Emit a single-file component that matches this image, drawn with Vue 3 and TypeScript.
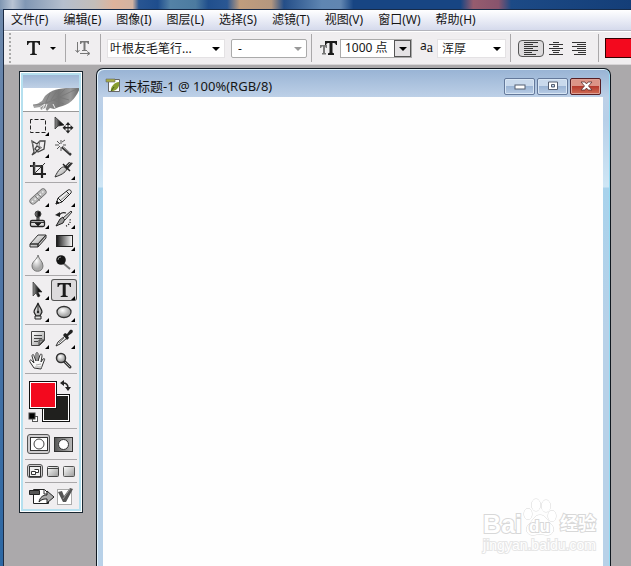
<script setup lang="ts">
import { ref } from 'vue'

interface Tool {
  id: string
  label: string
  flyout?: boolean
  art: string
}

const menus: string[] = ['文件(F)', '编辑(E)', '图像(I)', '图层(L)', '选择(S)', '滤镜(T)', '视图(V)', '窗口(W)', '帮助(H)']

const groups: Tool[][] = [
  [
    { id: 'marquee', label: '选框', flyout: true, art: '<rect x="5.500" y="4.500" width="15" height="13" fill="none" stroke="#222" stroke-dasharray="4 2" stroke-dashoffset="2"/>' },
    { id: 'move', label: '移动', art: '<path d="M4 2V14L7 11L13 10Z" fill="url(#dark)" stroke="#222" stroke-width=".7"/><path d="M17 7l-2.500 3h2v2h-2v-2l-3 2.800 3 2.800v-2h2v2h-2l2.500 3 2.500-3h-2v-2h2v2l3-2.800-3-2.800v2h-2v-2h2z" fill="#222"/>' },
    { id: 'lasso', label: '套索', flyout: true, art: '<path d="M7 4l5 3 3-3h5l-1 8-6 3-3-3 2-3 3 2-5 5-3 2 2-3z" fill="none" stroke="#444" stroke-width="1.300"/><path d="M7 4l2 8M15 4l-1 5 3 2" fill="none" stroke="#777"/>' },
    { id: 'wand', label: '魔棒', art: '<path d="M10 3v4m0 3v4M4 8h4m4 0h3M6 4l3 3m2-2l3-2M6 12l3-3" stroke="#555"/><path d="M11 10l9 8" stroke="#333" stroke-width="2.500"/><path d="M12 10l7 6" stroke="#aaa"/>' },
    { id: 'crop', label: '裁剪', art: '<path d="M9 3v12h12M5 7h12v12" fill="none" stroke="#222" stroke-width="2.200"/><path d="M9 15L20 4" stroke="#333"/><path d="M10 4v10M6 7h10" stroke="#888" stroke-width=".6"/>' },
    { id: 'slice', label: '切片', flyout: true, art: '<path d="M4 18C7 11 11 7 14 8l2 2c-2 4-6 6-12 8z" fill="url(#metal)" stroke="#333"/><path d="M13 8l5-5 4 1-6 7z" fill="#333"/><path d="M12 5l7 7" stroke="#222" stroke-width="1.500"/><path d="M16 7l4-4" stroke="#aaa"/>' }
  ],
  [
    { id: 'heal', label: '修复', flyout: true, art: '<path d="M8 15L18 6" stroke="#666" stroke-width="7" stroke-linecap="round"/><path d="M8 15L18 6" stroke="#b9b9b9" stroke-width="5.500" stroke-linecap="round"/><path d="M10 10l5 5M12 7l5 5" stroke="#666" stroke-width=".7"/><path d="M7 16L19 5" stroke="#f4f4f4" stroke-width="1.500" stroke-dasharray="1.500 2"/>' },
    { id: 'pencil', label: '画笔', flyout: true, art: '<path d="M5 18l2-6 10-8c2-1 4 1 3 3l-9 9z" fill="#eee" stroke="#222"/><path d="M5 18l3-1-2-2z" fill="#111" stroke="#222"/><path d="M15 5l4 4M7 12l4 4" stroke="#222"/><path d="M10 14l7-6" stroke="#aaa" stroke-width="1.500"/>' },
    { id: 'stamp', label: '图章', flyout: true, art: '<circle cx="13" cy="6" r="3" fill="url(#dark)" stroke="#444"/><path d="M12 9h2v4h-2z" fill="#999" stroke="#222"/><rect x="5.500" y="12.500" width="14" height="6" rx="1.500" fill="#ddd" stroke="#222" stroke-width="1.300"/><path d="M6 14.500h13M13 18l-3-3h6z" fill="#111" stroke="#333"/>' },
    { id: 'history', label: '历史画笔', flyout: true, art: '<path d="M5 18l4-7 3-2 2 2-2 4z" fill="#999" stroke="#222"/><path d="M12 10l8-7 1 1-7 8z" fill="#ccc" stroke="#333"/><path d="M8 8c1-3 4-4 7-3" fill="none" stroke="#222" stroke-width="1.200"/><path d="M9 4L4 7l5 2z" fill="#222"/><path d="M15 18c3-1 5-4 4-7" fill="none" stroke="#222" stroke-dasharray="1 1.500" stroke-width="1.500"/>' },
    { id: 'eraser', label: '橡皮擦', flyout: true, art: '<path d="M5 14l8-9h8l-8 9zM5 14h8v3H5zM13 14l8-9v3l-8 9z" fill="url(#metal)" stroke="#333"/>' },
    { id: 'gradient', label: '渐变', flyout: true, art: '<rect x="5.500" y="5.500" width="16" height="11" fill="url(#fade)" stroke="#222"/>' },
    { id: 'blur', label: '模糊', flyout: true, art: '<path d="M13 3c1 5 5 6 5 11 0 7-11 7-11 0 0-5 5-6 6-11z" fill="url(#ball)" stroke="#777"/>' },
    { id: 'dodge', label: '减淡', flyout: true, art: '<path d="M12 11l7 6" stroke="#777" stroke-width="2"/><circle cx="10" cy="8" r="4.800" fill="#151515"/><path d="M7 8q0-3 3-3" stroke="#888" fill="none"/>' }
  ],
  [
    { id: 'select', label: '选择', flyout: true, art: '<path d="M8 3v14l3-3 2 4 2-1-2-4h4z" fill="url(#dark)" stroke="#222" stroke-width=".6"/>' },
    { id: 'type', label: '文字', flyout: true, art: '<path d="M6.500 4h13.500v4h-1q-.5-2.500-2-2.500h-2.300v10.500q0 1 2 1v1h-7v-1q2 0 2-1V5.500H9.500q-1.500 0-2 2.500h-1z" fill="#1b1b1b"/>' },
    { id: 'pen', label: '钢笔', flyout: true, art: '<path d="M13 2c-1 4-4 6-4 9l2 4h4l2-4c0-3-3-5-4-9z" fill="url(#metal)" stroke="#222" stroke-width="1.200"/><path d="M13 4v6M10 15h6v3h-6z" fill="#ddd" stroke="#222"/><circle cx="13" cy="11" r="1.200" fill="#222"/>' },
    { id: 'ellipse', label: '椭圆', flyout: true, art: '<ellipse cx="13" cy="11" rx="7" ry="5.500" fill="url(#ball)" stroke="#333" stroke-width="1.300"/>' }
  ],
  [
    { id: 'notes', label: '注释', flyout: true, art: '<path d="M6.500 3.500h13v9l-5 5h-8z" fill="url(#metal)" stroke="#444"/><path d="M19 12h-5v5z" fill="#999" stroke="#444"/><path d="M9 7.500h8M9 10.500h8M9 13.500h4" stroke="#444"/>' },
    { id: 'eyedropper', label: '吸管', flyout: true, art: '<path d="M5 18l2-4 7-6 2 2-7 6z" fill="#eee" stroke="#333"/><path d="M12 7l2-2 2 1 3-4c2-1 4 1 2 3l-4 3 1 2-2 2z" fill="#222"/><path d="M8 15l5-5" stroke="#888"/>' },
    { id: 'hand', label: '抓手', art: '<path d="M9 18l-4-6c-1-2 1-3 2-1l2 2-2-7c0-2 2-2 2 0l2 5V4c0-2 2-2 2 0v7l2-6c1-2 2-1 2 1l-1 6 2-3c2-1 2 0 1 2l-3 8z" fill="#f8f8f8" stroke="#333"/><path d="M10 17h7M11 15l5-1" stroke="#aaa"/>' },
    { id: 'zoom', label: '缩放', art: '<path d="M13 11l6 6" stroke="#333" stroke-width="3" stroke-linecap="round"/><circle cx="10" cy="8" r="4.500" fill="url(#ball)" stroke="#333" stroke-width="1.500"/><path d="M14 12l5 5" stroke="#aaa"/>' }
  ]
]

const activeTool = ref('type')
const fontSize = ref('1000 点')
const align = ref('left')
const alignments = [
  { id: 'left', label: '左对齐', d: 'M1 1.500h14M1 3.500h9M1 5.500h14M1 7.500h9M1 9.500h14M1 11.500h8M1 13.500h12' },
  { id: 'center', label: '居中', d: 'M5 1.500h6M1 3.500h14M5 5.500h6M1 7.500h14M4 9.500h8M5 11.500h6M1 13.500h14' },
  { id: 'right', label: '右对齐', d: 'M1 1.500h14M6 3.500h9M1 5.500h14M6 7.500h9M1 9.500h14M7 11.500h8M3 13.500h12' }
]
</script>

<template>
  <div class="screen">
    <svg class="defs" aria-hidden="true">
      <defs>
        <linearGradient id="metal" x2="1" y2="1"><stop stop-color="#fff" /><stop offset="1" stop-color="#999" /></linearGradient>
        <linearGradient id="dark" x2="1" y2="0"><stop stop-color="#999" /><stop offset=".6" stop-color="#151515" /></linearGradient>
        <linearGradient id="maskfill" x2="1" y2="0"><stop stop-color="#555" /><stop offset="1" stop-color="#bbb" /></linearGradient>
        <linearGradient id="fade"><stop stop-color="#151515" /><stop offset="1" stop-color="#fff" /></linearGradient>
        <radialGradient id="ball" cx=".4" cy=".35"><stop stop-color="#fff" /><stop offset="1" stop-color="#aaa" /></radialGradient>
      </defs>
    </svg>
    <div class="desktop"></div>
    <div class="app">
      <nav class="menubar">
        <button v-for="m in menus" :key="m" class="menu">{{ m }}</button>
      </nav>

      <div class="options">
        <span class="grip"></span>
        <button class="preset" aria-label="工具预设">
          <svg width="32" height="18"><path d="M2 2h13v4h-1q-.5-2.500-2-2.500h-2.200v10.500q0 1 2 1v1h-6.600v-1q2 0 2-1V3.500H5q-1.500 0-2 2.500H2z" fill="#1b1b1b" /><path d="M25 8h6l-3 3z" fill="#000" /></svg>
        </button>
        <span class="divider"></span>
        <button class="orient" aria-label="文字方向">
          <svg width="18" height="18"><path d="M3.500 3v10M1.500 11l2 2.500 2-2.500M6 14.500h9M13 12.500l3 2-3 2" fill="none" stroke="#777" /><path d="M6 2h9v3h-1l-1-1.500h-1.500V11H13v1H8v-1h1.500V3.500H8L7 5H6z" fill="#777" /></svg>
        </button>
        <span class="divider"></span>
        <span class="pick family"><select aria-label="字体"><option>叶根友毛笔行...</option></select></span>
        <span class="pick style"><select aria-label="字形" disabled><option>-</option></select></span>
        <span class="divider"></span>
        <label class="size-icon" for="size" aria-label="字号">
          <svg width="18" height="16"><path d="M5 1h12v4h-1q-.5-2-2-2h-1.500v9.500q0 .8 1.500.8V15H8v-1.700q1.500 0 1.500-.8V3H8Q6.500 3 6 5H5z" fill="#1b1b1b" /><path d="M0 5h7v3H6L5 6.500V13h1v1.500H2V13h1V6.500H2L1 8H0z" fill="#777" /></svg>
        </label>
        <span class="size">
          <input id="size" v-model="fontSize" type="text" />
          <button aria-label="字号列表"></button>
        </span>
        <label class="aa" for="antialias"><sup>a</sup><span>a</span></label>
        <span class="pick smooth"><select id="antialias"><option>浑厚</option></select></span>
        <span class="divider"></span>
        <div class="aligns">
          <button v-for="a in alignments" :key="a.id" :class="{ on: align === a.id }" :aria-label="a.label" @click="align = a.id">
            <svg width="16" height="15"><path :d="a.d" stroke="#333" /></svg>
          </button>
        </div>
        <span class="divider"></span>
        <button class="text-color" aria-label="文本颜色"></button>
      </div>

      <main class="workspace">
        <aside class="toolbox">
          <div class="caption"></div>
          <div class="feather">
            <svg width="58" height="23">
              <path d="M10 17c4-1 6-2 9-4l3-5c6-6 14-8 25-8h10c-4 10-10 17-21 19l-5 2-4-1-3 3-2-3-4 2-1-3-6 1z" fill="url(#plume)" />
              <path d="M10 17C25 17 35 9 56 0M23 14l4-9M28 12l6-9M34 9l8-8M30 12l11 4M36 9l10 3" fill="none" stroke="#777" stroke-width=".8" />
              <path d="M16 20l6-4-3 6m5-6l-2 6m8-6l2 4" fill="none" stroke="#eee" />
              <defs><linearGradient id="plume"><stop stop-color="#aaa" /><stop offset=".55" stop-color="#777" /><stop offset=".8" stop-color="#999" /><stop offset="1" stop-color="#666" /></linearGradient></defs>
            </svg>
          </div>
          <div v-for="(g, i) in groups" :key="i" class="tools">
            <button v-for="t in g" :key="t.id" class="tool" :class="{ active: activeTool === t.id }" :aria-label="t.label" @click="activeTool = t.id">
              <svg width="26" height="22" fill="none">
                <g v-html="t.art"></g>
                <path v-if="t.flyout" d="M24 17v4h-4z" fill="#000" />
              </svg>
            </button>
          </div>
          <div class="colors">
            <svg width="52" height="44" role="img" aria-label="前景色和背景色">
              <rect x="17.500" y="14.500" width="27" height="27" fill="#fff" stroke="#111" />
              <rect x="19" y="16" width="24" height="24" fill="#20201e" />
              <rect x="4.500" y="1.500" width="27" height="27" fill="#fff" stroke="#111" />
              <rect x="6" y="3" width="24" height="24" fill="#f3091e" />
              <path d="M38 3q5 0 5 5" fill="none" stroke="#222" stroke-width="1.500" />
              <path d="M39 0v6l-4-3zM40 7h6l-3 4z" fill="#222" />
              <rect x="7.500" y="36.500" width="5" height="5" fill="#fff" stroke="#555" />
              <rect x="4" y="33" width="6" height="6" fill="#000" stroke="#444" />
            </svg>
          </div>
          <div class="modes mask">
            <button class="on" aria-label="标准模式"><svg width="18" height="14"><rect x=".5" y=".5" width="17" height="13" fill="#fff" stroke="#333" /><circle cx="9" cy="7" r="5" fill="#fff" stroke="#444" /></svg></button>
            <button aria-label="快速蒙版"><svg width="19" height="15"><rect x=".5" y=".5" width="18" height="14" fill="url(#maskfill)" stroke="#333" /><circle cx="9.500" cy="7.500" r="5" fill="#fff" stroke="#333" /></svg></button>
          </div>
          <div class="modes views">
            <button class="on" aria-label="标准屏幕"><svg width="12" height="11"><rect x=".5" y=".5" width="11" height="10" fill="#eee" stroke="#333" /><path d="M2.500 5.500h4v3h-4zM5.500 3.500h4v3h-3" fill="#fff" stroke="#333" /></svg></button>
            <button aria-label="带菜单全屏"><svg width="12" height="11"><rect x=".5" y=".5" width="11" height="10" rx="1" fill="url(#metal)" stroke="#444" /><path d="M1 2.500h10" stroke="#444" /></svg></button>
            <button aria-label="全屏"><svg width="12" height="11"><rect x=".5" y=".5" width="11" height="10" rx="1" fill="url(#metal)" stroke="#555" /></svg></button>
          </div>
          <div class="jump">
            <button aria-label="转到">
              <svg width="46" height="20">
                <path d="M5.500 2.500h11l4 4v10h-15z" fill="#fff" stroke="#222" /><path d="M1.500 3.500h10v4h-10z" fill="#555" stroke="#222" /><path d="M11 15c1-5 4-7 8-7V4l7 6-7 6v-4c-3 0-5 0-8 3z" fill="#aaa" stroke="#222" /><path d="M16 3v4h3" fill="none" stroke="#333" />
                <rect x="29.500" y="2.500" width="14" height="15" fill="#fff" stroke="#aaa" /><path d="M30 5l4-1 2 5 6-8 3 1-7 13h-3z" fill="#555" /><path d="M35 12l7-10" stroke="#999" />
              </svg>
            </button>
          </div>
        </aside>

        <section class="document">
          <header class="titlebar">
            <svg class="doc-icon" width="16" height="16"><path d="M3.500 2.500h11v12h-11z" fill="#fff" stroke="#666" /><path d="M1 2h9v3H1z" fill="#a8ae42" stroke="#666" stroke-width=".6" /><path d="M6 14c-1-3 3-9 8-9 1 5-2 8-6 9z" fill="#879c2d" /><path d="M6 14l3-4" stroke="#455d20" /></svg>
            <h1>未标题-1 @ 100%(RGB/8)</h1>
            <div class="window-buttons">
              <button aria-label="最小化"><svg width="14" height="10"><rect x="2" y="4" width="10" height="4" fill="#fff" stroke="#555e70" /></svg></button>
              <button aria-label="最大化"><svg width="14" height="10"><path fill-rule="evenodd" d="M2.500 1h9v7.500h-9zM5.500 3.500v2.500h3V3.500z" fill="#fff" stroke="#555e70" /></svg></button>
              <button class="close" aria-label="关闭"><svg width="14" height="10"><path d="M2 1h4l1.500 2L9 1h4L9.500 5 13 9H9L7.500 7 6 9H2l3.500-4z" fill="#fff" stroke="#5c3030" stroke-width=".8" /></svg></button>
            </div>
          </header>
          <div class="canvas">
            <div class="watermark">
              <div class="brand">
                <span>Bai</span>
                <span class="paw">
                  <svg width="34" height="40"><g fill="#fff" stroke="#d8d8d8"><ellipse cx="5" cy="16" rx="4" ry="5.500" /><ellipse cx="13" cy="7" rx="4.500" ry="6" /><ellipse cx="23" cy="8" rx="4.500" ry="6" /><ellipse cx="29" cy="18" rx="4" ry="5.500" /><path d="M17 17c6 0 7 6 11 9 5 5 2 12-5 11-4-1-8-1-12 0-7 1-10-6-5-11 4-3 5-9 11-9z" /></g></svg>
                  <b>du</b>
                </span>
                <span class="cn">经验</span>
              </div>
              <div class="site">jingyan.baidu.com</div>
            </div>
          </div>
        </section>
      </main>
    </div>
  </div>
</template>

<style>
body { margin: 0; }
</style>

<style scoped>
* { box-sizing: border-box; }
button, select, input { font: inherit; color: inherit; margin: 0; padding: 0; border: 0; background: none; }
svg { display: block; flex: none; }
.screen {
  min-height: 100vh;
  display: flex;
  flex-direction: column;
  background: linear-gradient(#6f8aad, #5578a6 40%, #2c68a4);
  font: 12px/16px "Noto Sans", "Noto Sans CJK SC", sans-serif;
  color: #151515;
}
.defs { position: absolute; width: 0; height: 0; }
.desktop {
  height: 9px;
  background: linear-gradient(90deg, #7f96b2 0, #b9c4d4 2%, #8097b4 4%, #b5bfce 10%, #c3beb9 15%, #deb39c 18%, #d3b3a1 21%, #285592 22%, #1e4d8d 25%, #5482a6 27%, #4c7ba0 31%, #204f8d 33%, #2a5793 36%, #c09d7d 38%, #b4977f 43%, #244e88 45%, #5f86b2 51%, #6186b1 54%, #174583 56%, #174583 73%, #965c6e 75%, #88546d 79%, #1c4a86 81%, #143e78);
}
.app {
  flex: 1;
  display: flex;
  flex-direction: column;
  margin-left: 3px;
  border-left: 1px solid #1d2c44;
  border-top: 1px solid #172b49;
  background: #aba9ab;
}
.menubar {
  display: flex;
  gap: 15px;
  height: 21px;
  padding-left: 7px;
  background: linear-gradient(#fff, #eef0f8 40%, #d5daec);
  border-bottom: 1px solid #b3b4bc;
}
.menu { white-space: nowrap; line-height: 20px; }
.options {
  display: flex;
  align-items: center;
  height: 34px;
  padding-left: 5px;
  background: #f0eef0;
  border-top: 1px solid #fff;
  border-bottom: 1px solid #d7d5d7;
  overflow: hidden;
}
.options > * { flex: none; }
.grip { width: 2px; height: 30px; background: repeating-linear-gradient(#aaa 0 2px, #f0eef0 2px 4px); }
.preset { margin: 0 8px 0 14px; }
.divider { width: 1px; height: 28px; background: #aaa8aa; }
.orient { margin: 0 8px; }
.pick { position: relative; height: 19px; background: #fff; border: 1px solid #e4e2e4; }
.pick::after, .size button::after {
  content: "";
  position: absolute;
  right: 4px;
  top: 7px;
  border: 4px solid transparent;
  border-top-color: #000;
  border-bottom: 0;
  pointer-events: none;
}
.pick select { appearance: none; width: 100%; height: 17px; padding-left: 2px; line-height: 17px; display: block; opacity: 1; }
.family { width: 118px; margin: 0 6px; }
.style { width: 76px; margin-right: 4px; border-color: #aaa; border-radius: 2px; }
.style select { padding-left: 6px; }
.style::after { border-top-color: #999; }
.size-icon { margin: 0 2px 0 8px; }
.size { display: flex; width: 72px; height: 19px; background: #fff; border: 1px solid #aaa; }
.size input { flex: 1; min-width: 0; padding-left: 4px; outline: 0; }
.size button { position: relative; width: 17px; background: #e4e2e4; border: 1px solid #555; }
.size button::after { right: 3px; top: 6px; }
.aa { display: flex; width: 17px; margin-left: 8px; font: 14px/16px "Noto Sans", sans-serif; }
.aa sup { font-size: 12px; line-height: 12px; }
.aa span { font-family: "Liberation Serif", serif; }
.smooth { width: 69px; margin-right: 4px; }
.smooth select { padding-left: 4px; }
.aligns { display: flex; margin: 0 8px 0 7px; }
.aligns button { display: grid; place-items: center; width: 23px; height: 17px; border: 1px solid transparent; }
.aligns .on { width: 26px; background: #dcdadc; border-color: #555; border-radius: 4px; }
.options .text-color { flex: 1 0 27px; height: 20px; margin-left: 6px; background: #f3091e; border: 1px solid #300; border-right: 0; }
.workspace { flex: 1; display: flex; align-items: flex-start; padding: 3px 20px 0 15px; }
.toolbox {
  flex: none;
  width: 64px;
  margin-top: 3px;
  border: 1px solid #18252f;
  box-shadow: inset 0 0 0 1px #fff, inset 0 0 0 3px #b5e0ef;
  padding: 3px;
  background: #f0eef0;
}
.caption { height: 13px; background: linear-gradient(#9fb8d6, #bfd0e5); }
.feather { height: 24px; background: #fff; border-bottom: 1px solid #999; overflow: hidden; }
.tools {
  display: grid;
  grid-template-columns: 26px 26px;
  justify-content: center;
  margin: 0 2px;
  padding: 3px 0 1px;
  border-bottom: 1px solid #aaa8aa;
}
.tool { height: 22px; }
.tool.active { background: #dcdadc; box-shadow: inset 0 0 0 1px #555; border-radius: 3px; }
.colors { margin: 0 2px; padding: 6px 0 4px; border-bottom: 1px solid #aaa8aa; }
.modes { display: flex; align-items: center; margin: 0 2px; border-bottom: 1px solid #aaa8aa; }
.modes button { display: grid; place-items: center; }
.modes .on { background: #cfcdcf; border: 1px solid #555; border-radius: 3px; }
.mask { height: 31px; gap: 4px; padding-left: 2px; }
.mask .on { width: 23px; height: 20px; }
.views { height: 23px; gap: 4px; padding-left: 2px; }
.views .on { width: 16px; height: 14px; }
.jump { display: flex; justify-content: center; padding: 4px 0 2px; }
.document {
  flex: 1;
  align-self: stretch;
  display: flex;
  flex-direction: column;
  margin-left: 13px;
  padding: 0 7px 0 6px;
  border: 1px solid #101820;
  border-bottom: 0;
  border-radius: 7px 7px 0 0;
  box-shadow: inset 1px 1px 0 #e2f2fa, inset -1px 0 0 #95dcf3;
  background: linear-gradient(#98b3d4 0, #bdd0e7 28px, #b7cfe8 50px, #cfe6f5 118px, #a8d2ec 119px, #b8d1e8 260px);
}
.titlebar { display: flex; align-items: center; gap: 3px; height: 28px; padding: 6px 2px 0; }
.doc-icon { margin-top: -2px; }
h1 { margin: 0; font: inherit; font-size: 13px; line-height: 20px; white-space: nowrap; }
.window-buttons { display: flex; gap: 2px; margin-left: auto; }
.window-buttons button {
  display: grid;
  place-items: center;
  width: 31px;
  height: 17px;
  border: 1px solid #64799b;
  border-radius: 2px;
  background: linear-gradient(#c9d9ec 45%, #9cb5d5 50%, #b8cce5);
  box-shadow: inset 0 0 0 1px #d8e6f4;
}
.window-buttons .close { border-color: #571e24; background: linear-gradient(#dc9487 45%, #b73b2e 50%, #cf6c55); box-shadow: inset 0 0 0 1px #dda095; }
.canvas { position: relative; flex: 1; background: #fefefe; }
.watermark {
  position: absolute;
  right: 7px;
  bottom: 14px;
  color: #fff;
  -webkit-text-stroke: 2px #d8d8d8;
  paint-order: stroke fill;
}
.brand { display: flex; align-items: flex-end; gap: 1px; font: bold 25px/28px "Liberation Sans", "Noto Sans CJK SC", sans-serif; }
.paw { position: relative; }
.paw b { position: absolute; left: 6px; bottom: 2px; font-size: 17px; line-height: 18px; }
.cn { font-size: 18px; margin-left: 2px; }
.site { font: 14px/14px "Liberation Sans", sans-serif; text-align: center; -webkit-text-stroke: 2px #e6e6e6; }
</style>
